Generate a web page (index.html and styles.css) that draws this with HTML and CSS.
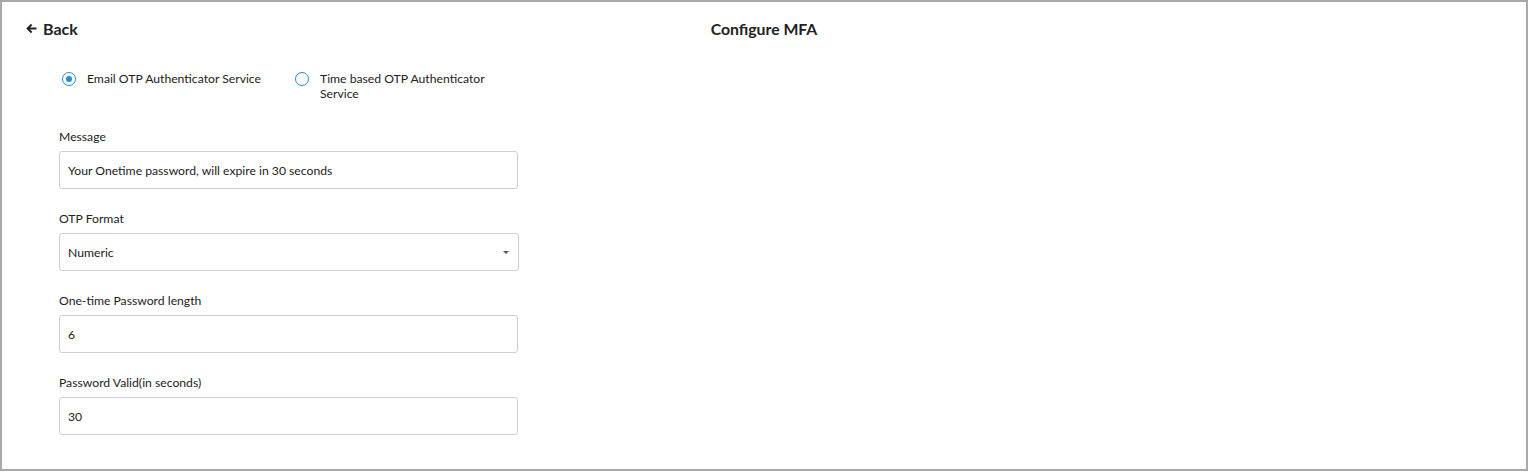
FILE: index.html
```html
<!DOCTYPE html>
<html lang="en">
<head>
  <meta charset="UTF-8" />
  <meta name="viewport" content="width=device-width, initial-scale=1.0"/>
  <title>Configure MFA</title>
  <link rel="stylesheet" href="styles.css">
</head>
<body>
<div class="frame">

  <div class="page-header">
    <a class="back-link" href="#">
      <svg width="11" height="11" viewBox="0 0 11 11" aria-hidden="true">
        <path d="M10.5 5.5H1.8M5.6 1.5L1.6 5.5l4 4" fill="none" stroke="#222" stroke-width="1.9"/>
      </svg>
      Back
    </a>
    <h1 class="page-title">Configure MFA</h1>
    <span></span>
  </div>

  <form class="mfa-form">
    <div class="service-options">
      <label class="radio-option">
        <input type="radio" name="service" checked>
        <span class="radio-mark"></span>
        <span class="radio-text">Email OTP Authenticator Service</span>
      </label>
      <label class="radio-option">
        <input type="radio" name="service">
        <span class="radio-mark"></span>
        <span class="radio-text">Time based OTP Authenticator Service</span>
      </label>
    </div>

    <div class="field">
      <label class="field-label">Message</label>
      <input class="field-input" type="text" value="Your Onetime password, will expire in 30 seconds">
    </div>

    <div class="field">
      <label class="field-label">OTP Format</label>
      <div class="select-wrap">
        <select class="field-input field-select">
          <option>Numeric</option>
          <option>Alphanumeric</option>
        </select>
      </div>
    </div>

    <div class="field">
      <label class="field-label">One-time Password length</label>
      <input class="field-input" type="text" value="6">
    </div>

    <div class="field">
      <label class="field-label">Password Valid(in seconds)</label>
      <input class="field-input" type="text" value="30">
    </div>
  </form>

</div>
</body>
</html>
```

FILE: styles.css
```css
* {
  box-sizing: border-box;
}

body {
  margin: 0;
  font-family: Lato, "Open Sans", sans-serif;
  color: #222;
  background: #fff;
}

.frame {
  width: 1528px;
  height: 471px;
  border: 2px solid #a9a9a9;
  overflow: hidden;
}

.page-header {
  display: grid;
  grid-template-columns: 1fr auto 1fr;
  align-items: center;
  padding: 15px 24px 0;
  height: 37px;
}

.back-link {
  display: flex;
  align-items: center;
  gap: 6px;
  font-size: 16px;
  font-weight: 700;
  color: #222;
  text-decoration: none;
}

.page-title {
  margin: 0;
  font-size: 15.8px;
  font-weight: 700;
  color: #222;
}

.mfa-form {
  width: 460px;
  margin-left: 57px;
  padding-top: 32px;
}

.service-options {
  display: flex;
  gap: 34px;
  padding-left: 3px;
  margin-bottom: 28px;
}

.radio-option {
  display: flex;
  align-items: flex-start;
  gap: 11px;
  font-size: 12.2px;
  line-height: 15px;
  cursor: pointer;
}

.radio-option:last-child {
  width: 200px;
}

.radio-option input {
  display: none;
}

.radio-mark {
  flex: none;
  width: 14px;
  height: 14px;
  margin-top: 1px;
  border: 1.5px solid #1e8de0;
  border-radius: 50%;
  position: relative;
}

.radio-option input:checked + .radio-mark::after {
  content: "";
  position: absolute;
  top: 2.5px;
  left: 2.5px;
  width: 6px;
  height: 6px;
  border-radius: 50%;
  background: #1e8de0;
}

.field {
  display: flex;
  flex-direction: column;
  gap: 6px;
  margin-bottom: 22px;
}

.field-label {
  font-size: 12.2px;
  line-height: 16px;
  color: #222;
}

.field-input {
  width: 459px;
  height: 38px;
  padding: 0 8px;
  border: 1px solid #cfcfcf;
  border-radius: 3px;
  font-family: inherit;
  font-size: 12.2px;
  color: #222;
  background: #fff;
  outline: none;
}

.select-wrap {
  position: relative;
  width: 460px;
}

.field-select {
  width: 460px;
  appearance: none;
  -webkit-appearance: none;
}

/* small caret on the right of the select */
.select-wrap::after {
  content: "";
  position: absolute;
  right: 10px;
  top: 18px;
  border-left: 3px solid transparent;
  border-right: 3px solid transparent;
  border-top: 3px solid #555;
  pointer-events: none;
}
```
